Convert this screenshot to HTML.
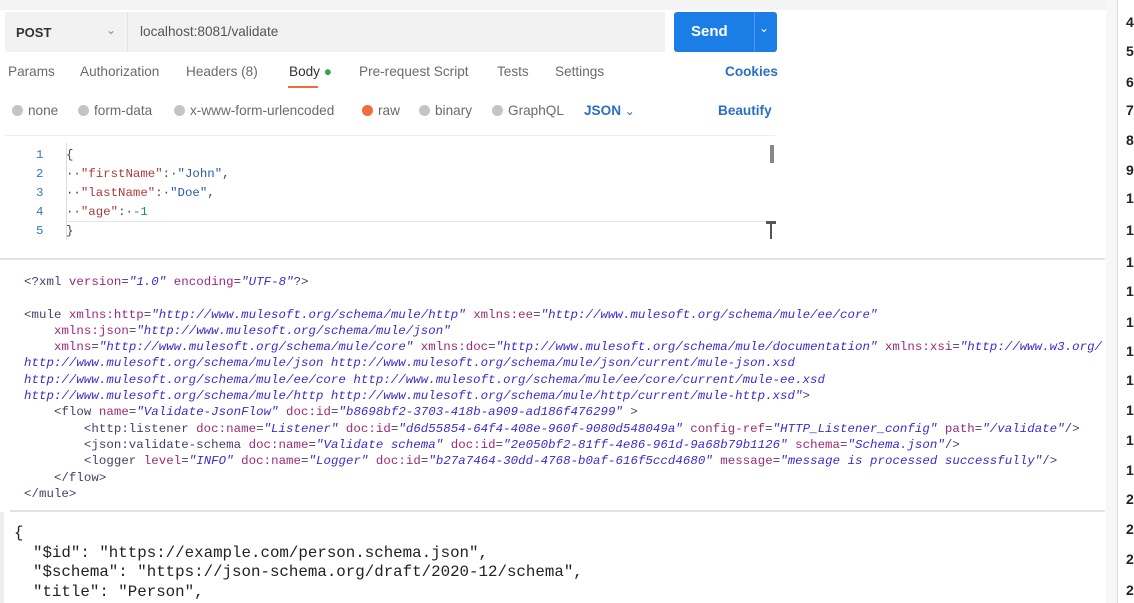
<!DOCTYPE html>
<html><head><meta charset="utf-8"><style>
body{margin:0;width:1134px;height:603px;background:#fff;position:relative;overflow:hidden;font-family:"Liberation Sans",sans-serif;}
.a{position:absolute;white-space:pre;}
.ui{font-size:13.6px;color:#6b6b6b;}
.x{font-family:"Liberation Mono",monospace;font-size:12.4px;color:#4a3a6a;letter-spacing:0.05px}
.x i{color:#3b2bd0;}
.x b{font-weight:normal;color:#9a2a78;}
.e{font-family:"Liberation Mono",monospace;font-size:12.4px;color:#444;}
.k{color:#b03a3a}.v{color:#2a5aa8}.n{color:#2a8a5a}
.j{font-family:"Liberation Mono",monospace;font-size:15.8px;color:#222;}
.dot{display:inline-block;width:11px;height:11px;border-radius:50%;background:#c4c4c4;vertical-align:-1px;margin-right:5px}
.rn{position:absolute;left:1126px;font-weight:bold;font-size:14px;color:#222;}
</style></head><body>
<div class="a" style="left:0;top:0;width:1110px;height:10px;background:#f4f4f4"></div>
<div class="a" style="left:1117px;top:0;width:1px;height:603px;background:#ddd"></div>
<div class="a" style="left:1106px;top:0;width:11px;height:603px;background:#f7f7f7"></div>
<div class="rn" style="top:14px">4</div><div class="rn" style="top:43px">5</div><div class="rn" style="top:74px">6</div><div class="rn" style="top:102px">7</div><div class="rn" style="top:132px">8</div><div class="rn" style="top:162px">9</div><div class="rn" style="top:190px">10</div><div class="rn" style="top:222px">11</div><div class="rn" style="top:254px">12</div><div class="rn" style="top:283px">13</div><div class="rn" style="top:314px">14</div><div class="rn" style="top:343px">15</div><div class="rn" style="top:372px">16</div><div class="rn" style="top:402px">17</div><div class="rn" style="top:432px">18</div><div class="rn" style="top:462px">19</div><div class="rn" style="top:491px">20</div><div class="rn" style="top:521px">21</div><div class="rn" style="top:551px">22</div><div class="rn" style="top:582px">23</div>

<div class="a" style="left:5px;top:12px;width:660px;height:40px;background:#f2f2f2"></div>
<div class="a" style="left:127px;top:12px;width:1px;height:40px;background:#e2e2e2"></div>
<div class="a" style="left:16px;top:25px;font-size:13px;font-weight:bold;color:#333">POST</div>
<div class="a" style="left:106px;top:23px;font-size:12px;color:#888">&#8964;</div>
<div class="a" style="left:140px;top:24px;font-size:13.6px;color:#555">localhost:8081/validate</div>
<div class="a" style="left:674px;top:12px;width:103px;height:40px;background:#1a7ee6;border-radius:3px"></div>
<div class="a" style="left:754px;top:12px;width:1px;height:40px;background:#4b98ec"></div>
<div class="a" style="left:691px;top:23px;font-size:15px;font-weight:bold;color:#fff">Send</div>
<div class="a" style="left:759px;top:21px;font-size:12px;color:#fff">&#8964;</div>

<div class="a ui" style="left:8px;top:64px">Params</div>
<div class="a ui" style="left:80px;top:64px">Authorization</div>
<div class="a ui" style="left:186px;top:64px">Headers (8)</div>
<div class="a ui" style="left:289px;top:64px;color:#333">Body <span style="color:#2aa84a">&#9679;</span></div>
<div class="a" style="left:288px;top:86px;width:30px;height:2px;background:#f26b3a"></div>
<div class="a ui" style="left:359px;top:64px">Pre-request Script</div>
<div class="a ui" style="left:497px;top:64px">Tests</div>
<div class="a ui" style="left:555px;top:64px">Settings</div>
<div class="a ui" style="left:725px;top:64px;color:#2a6fc4;font-weight:bold">Cookies</div>

<div class="a ui" style="left:12px;top:103px"><span class="dot"></span>none</div>
<div class="a ui" style="left:78px;top:103px"><span class="dot"></span>form-data</div>
<div class="a ui" style="left:174px;top:103px"><span class="dot"></span>x-www-form-urlencoded</div>
<div class="a ui" style="left:362px;top:103px"><span class="dot" style="background:#f26b3a"></span>raw</div>
<div class="a ui" style="left:419px;top:103px"><span class="dot"></span>binary</div>
<div class="a ui" style="left:492px;top:103px"><span class="dot"></span>GraphQL</div>
<div class="a ui" style="left:584px;top:103px;color:#2a6fc4;font-weight:bold">JSON <span style="font-weight:normal;font-size:12px">&#8964;</span></div>
<div class="a ui" style="left:718px;top:103px;color:#2a6fc4;font-weight:bold">Beautify</div>

<div class="a" style="left:5px;top:135px;width:770px;height:1px;background:#eee"></div>
<div class="a" style="left:66px;top:143px;width:1px;height:97px;background:#ddd"></div>
<div class="a" style="left:66px;top:221px;width:710px;height:1px;background:#e6e6e6"></div>
<div class="a" style="left:770px;top:145px;width:4px;height:18px;background:#888"></div>
<div class="a" style="left:766px;top:221px;width:10px;height:17px;border-top:3px solid #555"></div>
<div class="a" style="left:770px;top:221px;width:2px;height:18px;background:#555"></div>
<div class="a e" style="left:36px;top:146px;line-height:19px;color:#3a7ab0">1
2
3
4
5</div>
<div class="a e" style="left:66px;top:146px;line-height:19px">{
··<span class="k">"firstName"</span>:·<span class="v">"John"</span>,
··<span class="k">"lastName"</span>:·<span class="v">"Doe"</span>,
··<span class="k">"age"</span>:·<span class="n">-1</span>
}</div>

<div class="a" style="left:0;top:258px;width:1105px;height:2px;background:#e2e2e2"></div>
<div class="a x" style="left:24px;top:274px;line-height:16.3px">&lt;?xml <b>version</b>=<i>"1.0"</i> <b>encoding</b>=<i>"UTF-8"</i>?&gt;

&lt;mule <b>xmlns:http</b>=<i>"http://www.mulesoft.org/schema/mule/http"</i> <b>xmlns:ee</b>=<i>"http://www.mulesoft.org/schema/mule/ee/core"</i>
    <b>xmlns:json</b>=<i>"http://www.mulesoft.org/schema/mule/json"</i>
    <b>xmlns</b>=<i>"http://www.mulesoft.org/schema/mule/core"</i> <b>xmlns:doc</b>=<i>"http://www.mulesoft.org/schema/mule/documentation"</i> <b>xmlns:xsi</b>=<i>"http://www.w3.org/</i>
<i>http://www.mulesoft.org/schema/mule/json http://www.mulesoft.org/schema/mule/json/current/mule-json.xsd</i>
<i>http://www.mulesoft.org/schema/mule/ee/core http://www.mulesoft.org/schema/mule/ee/core/current/mule-ee.xsd</i>
<i>http://www.mulesoft.org/schema/mule/http http://www.mulesoft.org/schema/mule/http/current/mule-http.xsd"</i>&gt;
    &lt;flow <b>name</b>=<i>"Validate-JsonFlow"</i> <b>doc:id</b>=<i>"b8698bf2-3703-418b-a909-ad186f476299"</i> &gt;
        &lt;http:listener <b>doc:name</b>=<i>"Listener"</i> <b>doc:id</b>=<i>"d6d55854-64f4-408e-960f-9080d548049a"</i> <b>config-ref</b>=<i>"HTTP_Listener_config"</i> <b>path</b>=<i>"/validate"</i>/&gt;
        &lt;json:validate-schema <b>doc:name</b>=<i>"Validate schema"</i> <b>doc:id</b>=<i>"2e050bf2-81ff-4e86-961d-9a68b79b1126"</i> <b>schema</b>=<i>"Schema.json"</i>/&gt;
        &lt;logger <b>level</b>=<i>"INFO"</i> <b>doc:name</b>=<i>"Logger"</i> <b>doc:id</b>=<i>"b27a7464-30dd-4768-b0af-616f5ccd4680"</i> <b>message</b>=<i>"message is processed successfully"</i>/&gt;
    &lt;/flow&gt;
&lt;/mule&gt;</div>

<div class="a" style="left:10px;top:510px;width:1095px;height:2px;background:#e2e2e2"></div>
<div class="a" style="left:0;top:512px;width:4px;height:91px;background:#eee"></div>
<div class="a j" style="left:14px;top:524px;line-height:19.5px">{
  "$id": "https://example.com/person.schema.json",
  "$schema": "https://json-schema.org/draft/2020-12/schema",
  "title": "Person",</div>
</body></html>
